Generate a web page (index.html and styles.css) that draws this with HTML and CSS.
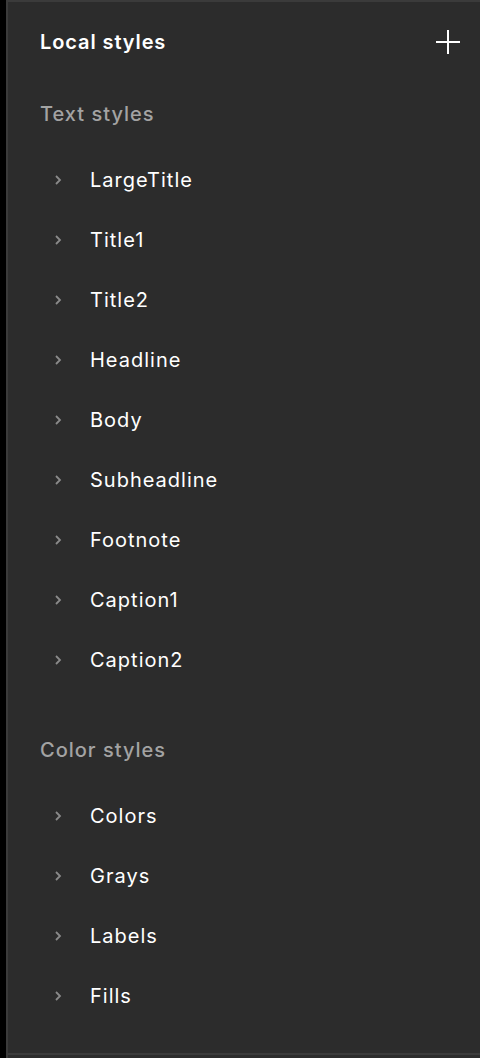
FILE: index.html
```html
<!DOCTYPE html>
<html>
<head>
<meta charset="utf-8">
<link rel="stylesheet" href="styles.css">
</head>
<body>
<div class="rail"></div>
<div class="panel">
  <div class="content">
    <div class="header">
      <span class="title">Local styles</span>
      <svg class="plus" width="24" height="24" viewBox="0 0 24 24"><path d="M12 0V24M0 12H24" stroke="#ffffff" stroke-width="2"/></svg>
    </div>
    <div class="section-title">Text styles</div>
    <ul class="list">
      <li class="item"><svg class="chev" width="8" height="12" viewBox="0 0 8 12"><path d="M2 2L6 6L2 10" fill="none" stroke="#8a8a8a" stroke-width="1.8"/></svg><span>LargeTitle</span></li>
      <li class="item"><svg class="chev" width="8" height="12" viewBox="0 0 8 12"><path d="M2 2L6 6L2 10" fill="none" stroke="#8a8a8a" stroke-width="1.8"/></svg><span>Title1</span></li>
      <li class="item"><svg class="chev" width="8" height="12" viewBox="0 0 8 12"><path d="M2 2L6 6L2 10" fill="none" stroke="#8a8a8a" stroke-width="1.8"/></svg><span>Title2</span></li>
      <li class="item"><svg class="chev" width="8" height="12" viewBox="0 0 8 12"><path d="M2 2L6 6L2 10" fill="none" stroke="#8a8a8a" stroke-width="1.8"/></svg><span>Headline</span></li>
      <li class="item"><svg class="chev" width="8" height="12" viewBox="0 0 8 12"><path d="M2 2L6 6L2 10" fill="none" stroke="#8a8a8a" stroke-width="1.8"/></svg><span>Body</span></li>
      <li class="item"><svg class="chev" width="8" height="12" viewBox="0 0 8 12"><path d="M2 2L6 6L2 10" fill="none" stroke="#8a8a8a" stroke-width="1.8"/></svg><span>Subheadline</span></li>
      <li class="item"><svg class="chev" width="8" height="12" viewBox="0 0 8 12"><path d="M2 2L6 6L2 10" fill="none" stroke="#8a8a8a" stroke-width="1.8"/></svg><span>Footnote</span></li>
      <li class="item"><svg class="chev" width="8" height="12" viewBox="0 0 8 12"><path d="M2 2L6 6L2 10" fill="none" stroke="#8a8a8a" stroke-width="1.8"/></svg><span>Caption1</span></li>
      <li class="item"><svg class="chev" width="8" height="12" viewBox="0 0 8 12"><path d="M2 2L6 6L2 10" fill="none" stroke="#8a8a8a" stroke-width="1.8"/></svg><span>Caption2</span></li>
    </ul>
    <div class="section-title second">Color styles</div>
    <ul class="list">
      <li class="item"><svg class="chev" width="8" height="12" viewBox="0 0 8 12"><path d="M2 2L6 6L2 10" fill="none" stroke="#8a8a8a" stroke-width="1.8"/></svg><span>Colors</span></li>
      <li class="item"><svg class="chev" width="8" height="12" viewBox="0 0 8 12"><path d="M2 2L6 6L2 10" fill="none" stroke="#8a8a8a" stroke-width="1.8"/></svg><span>Grays</span></li>
      <li class="item"><svg class="chev" width="8" height="12" viewBox="0 0 8 12"><path d="M2 2L6 6L2 10" fill="none" stroke="#8a8a8a" stroke-width="1.8"/></svg><span>Labels</span></li>
      <li class="item"><svg class="chev" width="8" height="12" viewBox="0 0 8 12"><path d="M2 2L6 6L2 10" fill="none" stroke="#8a8a8a" stroke-width="1.8"/></svg><span>Fills</span></li>
    </ul>
  </div>
  <div class="footer"></div>
</div>
</body>
</html>
```
FILE: styles.css
```css
html, body {
  margin: 0;
  padding: 0;
  height: 100%;
}
body {
  display: flex;
  background: #000000;
  font-family: Inter, "Liberation Sans", sans-serif;
  overflow: hidden;
}
.rail {
  width: 6px;
  flex: none;
  background: #000000;
}
.panel {
  flex: 1;
  display: flex;
  flex-direction: column;
  height: 1058px;
  box-sizing: border-box;
  background: #2c2c2c;
  border-left: 2px solid #3b3b3b;
  border-top: 2px solid #3b3b3b;
}
.content {
  height: 1051px;
  flex: none;
  border-bottom: 2px solid #3b3b3b;
}
.footer {
  flex: 1;
}
.header {
  height: 80px;
  display: flex;
  align-items: center;
  justify-content: space-between;
  padding: 0 20px 0 32px;
}
.title {
  color: #ffffff;
  font-size: 20px;
  font-weight: 600;
  letter-spacing: 0.9px;
}
.plus {
  display: block;
}
.section-title {
  height: 64px;
  display: flex;
  align-items: center;
  padding-left: 32px;
  color: #a3a3a3;
  font-size: 20px;
  font-weight: 500;
  letter-spacing: 1px;
}
.section-title.second {
  margin-top: 28px;
}
.list {
  list-style: none;
  margin: 0;
  padding: 4px 0 0 0;
}
.item {
  height: 60px;
  display: flex;
  align-items: center;
  padding-left: 46px;
  color: #ffffff;
  font-size: 20px;
  font-weight: 400;
  letter-spacing: 1px;
}
.chev {
  display: block;
  margin-right: 28px;
}
```
